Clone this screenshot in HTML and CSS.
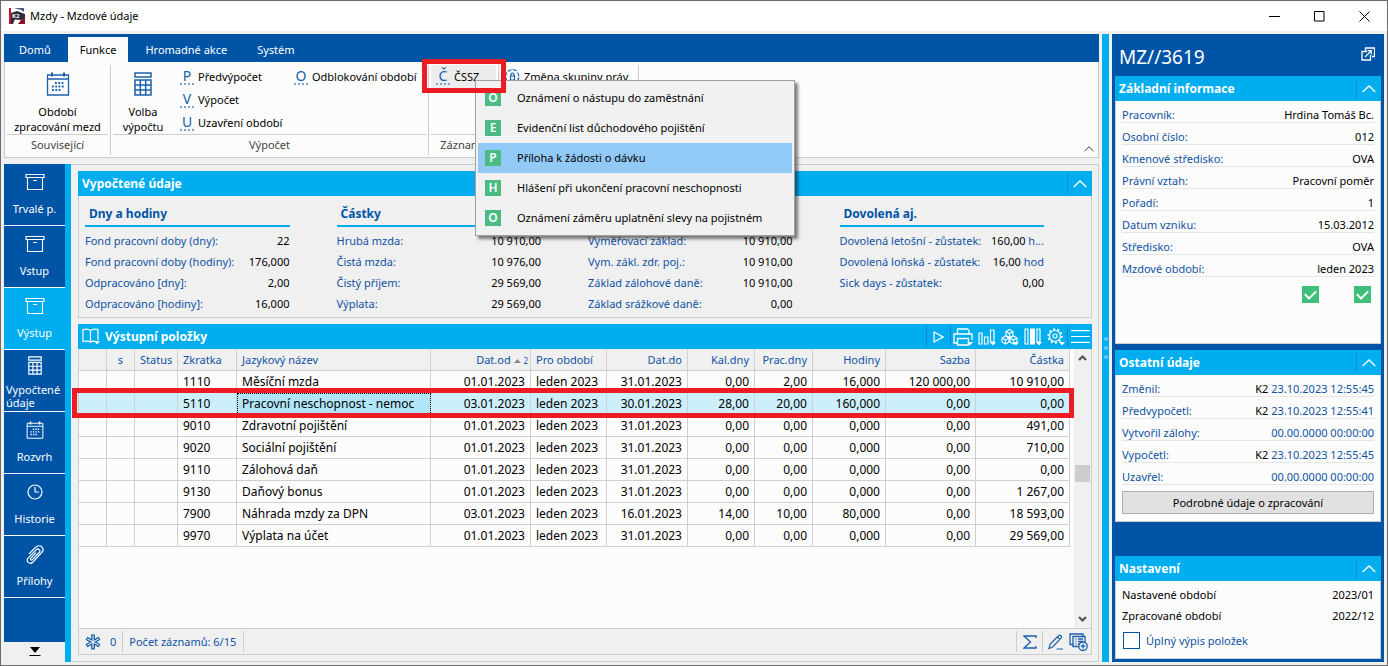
FILE: index.html
```html
<!DOCTYPE html>
<html lang="cs">
<head>
<meta charset="utf-8">
<title>Mzdy - Mzdové údaje</title>
<link rel="stylesheet" href="styles.css">
</head>
<body>
<svg class="defs" aria-hidden="true">
  <symbol id="i-box" viewBox="0 0 20 18"><path d="M1 1.500h18v3H1zM2.500 4.500h15v12h-15zM8 7.500h4" fill="none" stroke="currentColor" stroke-width="1.100"/></symbol>
  <symbol id="i-calc" viewBox="0 0 18 24"><path d="M1 1h16v4H1zM1 8h16v15H1zM1 13h16M1 18h16M6.300 8v15M11.700 8v15" fill="none" stroke="currentColor" stroke-width="1.500"/></symbol>
  <symbol id="i-cal" viewBox="0 0 24 24"><path d="M1.500 3h21v20h-21zM1.500 7h21" fill="none" stroke="currentColor" stroke-width="1.300"/><path d="M6 .500v4M18 .500v4" stroke="currentColor" stroke-width="2"/><path d="M9 11h10M6 14.500h13M6 18h9" stroke="currentColor" stroke-width="1.800" stroke-dasharray="1.800 1.500"/></symbol>
  <symbol id="i-up" viewBox="0 0 14 8"><path d="M.700 7L7 1l6.300 6" fill="none" stroke="currentColor" stroke-width="1.300"/></symbol>
</svg>
<div class="window">
  <header class="titlebar">
    <svg class="logo" viewBox="0 0 16 16"><path d="M0 0h16v16H0z" fill="#fff"/><path d="M0 0h2v16H0z" fill="#d3122a"/><path d="M2 5l6-2 8 3v5l-5 1-9-1z" fill="#2a2c3c"/><path d="M5 0h10v4l-3-2z" fill="#4a5a78"/><path d="M2 11h4l-2 5H2z" fill="#2a2c3c"/><path d="M9 16l3-4 4-3v7z" fill="#8d1226"/><text x="3" y="10" class="logo-text">K2</text></svg>
    <h1 class="window-title">Mzdy - Mzdové údaje</h1>
    <button class="win-btn" aria-label="Minimalizovat"><svg width="11" height="11" viewBox="0 0 11 11"><path d="M0 5.500h11" stroke="#000"/></svg></button>
    <button class="win-btn" aria-label="Maximalizovat"><svg width="11" height="11" viewBox="0 0 11 11"><path d="M.5.5h9.500v9.500H.5z" fill="none" stroke="#000"/></svg></button>
    <button class="win-btn" aria-label="Zavřít"><svg width="11" height="11" viewBox="0 0 11 11"><path d="M.5.5l10 10M10.500.5l-10 10" stroke="#000"/></svg></button>
  </header>

  <div class="frame">
    <div class="main">
      <nav class="tabs">
        <button class="tab">Domů</button>
        <button class="tab tab-active">Funkce</button>
        <button class="tab">Hromadné akce</button>
        <button class="tab">Systém</button>
      </nav>

      <section class="ribbon">
        <div class="group group-related">
          <div class="group-body">
            <button class="big-btn"><svg width="24" height="24"><use href="#i-cal"/></svg><span>Období<br>zpracování mezd</span></button>
          </div>
          <div class="group-label">Související</div>
        </div>
        <div class="group group-calc">
          <div class="group-body">
            <button class="big-btn"><svg width="18" height="24"><use href="#i-calc"/></svg><span>Volba<br>výpočtu</span></button>
            <div class="small-col small-col-wide">
              <button class="small-btn"><span class="letter">P</span>Předvýpočet</button>
              <button class="small-btn"><span class="letter">V</span>Výpočet</button>
              <button class="small-btn"><span class="letter">U</span>Uzavření období</button>
            </div>
            <div class="small-col">
              <button class="small-btn"><span class="letter">O</span>Odblokování období</button>
            </div>
          </div>
          <div class="group-label">Výpočet</div>
        </div>
        <div class="group group-records">
          <div class="group-body">
            <div class="dropdown">
              <button class="small-btn small-btn-open"><span class="letter">Č</span>ČSSZ</button>
              <ul class="menu">
                <li><button class="menu-item"><span class="badge">O</span>Oznámení o nástupu do zaměstnání</button></li>
                <li><button class="menu-item"><span class="badge">E</span>Evidenční list důchodového pojištění</button></li>
                <li><button class="menu-item menu-item-active"><span class="badge">P</span>Příloha k žádosti o dávku</button></li>
                <li><button class="menu-item"><span class="badge">H</span>Hlášení při ukončení pracovní neschopnosti</button></li>
                <li><button class="menu-item"><span class="badge">O</span>Oznámení záměru uplatnění slevy na pojistném</button></li>
              </ul>
              <span class="mark mark-button"></span>
            </div>
          </div>
          <div class="group-label">Záznamy</div>
        </div>
        <div class="group group-rights">
          <div class="group-body">
            <button class="small-btn"><svg width="15" height="15" viewBox="0 0 15 15" fill="none" stroke="#1b5fad" stroke-width="1.200"><path d="M3 2.500a6.500 6.500 0 0 1 9 0M12.500 3.500a6.500 6.500 0 0 1-1 9M2 3.500a6.500 6.500 0 0 0 0 8" stroke-dasharray="4 1"/><path d="M5.500 7h4v4h-4zM6 7V5.500a1.500 1.500 0 0 1 3 0V7"/></svg>Změna skupiny práv</button>
          </div>
          <div class="group-label">&nbsp;</div>
        </div>
        <button class="collapse-ribbon" aria-label="Sbalit pás karet"><svg width="10" height="6"><use href="#i-up"/></svg></button>
      </section>

      <div class="work">
        <nav class="side-nav">
          <button class="nav-item"><svg width="20" height="18"><use href="#i-box"/></svg><span>Trvalé p.</span></button>
          <button class="nav-item"><svg width="20" height="18"><use href="#i-box"/></svg><span>Vstup</span></button>
          <button class="nav-item nav-active"><svg width="20" height="18"><use href="#i-box"/></svg><span>Výstup</span></button>
          <button class="nav-item nav-two"><svg width="14" height="19"><use href="#i-calc"/></svg><span>Vypočtené údaje</span></button>
          <button class="nav-item"><svg width="18" height="18"><use href="#i-cal"/></svg><span>Rozvrh</span></button>
          <button class="nav-item"><svg width="18" height="18" viewBox="0 0 18 18" fill="none" stroke="#fff" stroke-width="1.200"><circle cx="9" cy="9" r="7"/><path d="M9 4v5h4"/></svg><span>Historie</span></button>
          <button class="nav-item"><svg width="18" height="20" viewBox="0 0 18 20" fill="none" stroke="#fff" stroke-width="1.200"><path d="M3 9l6.500-6.700c2-2 4.800-1.800 6.300-.3 1.600 1.600 1.400 4-.2 5.700L7 17c-1.500 1.500-3.500 1.600-4.800.4C.9 16 1.200 14 2.500 12.700l7.600-7.900c1-1 2.400-1 3.200-.2.800.8.700 2-.1 2.900L6.400 14.600c-.5.500-1.300.5-1.700.1-.5-.4-.4-1.100.1-1.600L10 7.700"/></svg><span>Přílohy</span></button>
          <button class="nav-more" aria-label="Další"><svg width="12" height="10" viewBox="0 0 12 10"><path d="M1 0h10L6 6z"/><path d="M.5 8.500h11" stroke="#000"/></svg></button>
        </nav>

        <div class="content">
          <section class="panel">
            <header class="panel-head">
              <h2>Vypočtené údaje</h2>
              <button class="head-btn" aria-label="Sbalit"><svg width="14" height="8"><use href="#i-up"/></svg></button>
            </header>
            <div class="summary">
              <div class="sum-col">
                <h3>Dny a hodiny</h3>
                <dl>
                  <div><dt>Fond pracovní doby (dny):</dt><dd>22</dd></div>
                  <div><dt>Fond pracovní doby (hodiny):</dt><dd>176,000</dd></div>
                  <div><dt>Odpracováno [dny]:</dt><dd>2,00</dd></div>
                  <div><dt>Odpracováno [hodiny]:</dt><dd>16,000</dd></div>
                </dl>
              </div>
              <div class="sum-col">
                <h3>Částky</h3>
                <dl>
                  <div><dt>Hrubá mzda:</dt><dd>10 910,00</dd></div>
                  <div><dt>Čistá mzda:</dt><dd>10 976,00</dd></div>
                  <div><dt>Čistý příjem:</dt><dd>29 569,00</dd></div>
                  <div><dt>Výplata:</dt><dd>29 569,00</dd></div>
                </dl>
              </div>
              <div class="sum-col">
                <div class="sum-rule"></div>
                <dl>
                  <div><dt>Vyměřovací základ:</dt><dd>10 910,00</dd></div>
                  <div><dt>Vym. zákl. zdr. poj.:</dt><dd>10 910,00</dd></div>
                  <div><dt>Základ zálohové daně:</dt><dd>10 910,00</dd></div>
                  <div><dt>Základ srážkové daně:</dt><dd>0,00</dd></div>
                </dl>
              </div>
              <div class="sum-col">
                <h3>Dovolená aj.</h3>
                <dl>
                  <div><dt>Dovolená letošní - zůstatek:</dt><dd>160,00 <span class="unit">h...</span></dd></div>
                  <div><dt>Dovolená loňská - zůstatek:</dt><dd>16,00 <span class="unit">hod</span></dd></div>
                  <div><dt>Sick days - zůstatek:</dt><dd>0,00</dd></div>
                </dl>
              </div>
            </div>
          </section>

          <section class="panel panel-items">
            <header class="panel-head">
              <svg class="book" width="18" height="17" viewBox="0 0 18 17" fill="none" stroke="#fff" stroke-width="1.200"><path d="M8.500 14V2.500C7 1 3 1 1 1.500V13.500c3-.5 6-.5 7.500.8 1.500-1.300 3-1.300 4.500-1M8.500 2.500C10 1 14 1 16 1.500V12"/><path d="M12 13h6l-3 3.500z" fill="#fff" stroke="none"/></svg>
              <h2>Výstupní položky</h2>
              <button class="head-btn head-play" aria-label="Spustit"><svg width="11" height="12" viewBox="0 0 11 12" fill="none" stroke="#fff" stroke-width="1.200"><path d="M1 1l9 5-9 5z"/></svg></button>
              <div class="tools">
                <button class="tool" aria-label="Tisk"><svg width="20" height="18" viewBox="0 0 20 18" fill="none" stroke="#fff" stroke-width="1.300"><path d="M4.500 6V1h10l1.500 1.500V6M4.500 15H1V6h18v6M4.500 10.500h11V17h-11z"/><path d="M14 14h6l-3 3.500z" fill="#fff" stroke="none"/></svg></button>
                <button class="tool" aria-label="Graf"><svg width="18" height="18" viewBox="0 0 18 18" fill="none" stroke="#fff" stroke-width="1.200"><path d="M1 5h3v11H1zM6.500 9h3.500v7H6.500zM12.500 2H16v12h-3.500z"/><path d="M12 14h6l-3 3.500z" fill="#fff" stroke="none"/></svg></button>
                <button class="tool" aria-label="Kostky"><svg width="18" height="18" viewBox="0 0 18 18" fill="none" stroke="#fff" stroke-width="1.100"><path d="M8.500 1.500l3.500 2v4l-3.500 2-3.500-2v-4zM5 3.500l3.500 2 3.500-2M8.500 5.500v4M4.500 8L8 10v4l-3.500 2L1 14v-4zM1 10l3.500 2L8 10M4.500 12v4M12.500 8l3.500 2v4l-3.500 2L9 14v-4zM9 10l3.500 2 3.500-2M12.500 12v4"/><path d="M12 14h6l-3 3.500z" fill="#fff" stroke="none"/></svg></button>
                <button class="tool" aria-label="Sloupce"><svg width="18" height="18" viewBox="0 0 18 18" fill="none" stroke="#fff" stroke-width="1.200"><path d="M1 1h3v15H1zM13 1h3v13h-3z"/><path d="M6 .500h5v16H6zM12 14h6l-3 3.500z" fill="#fff" stroke="none"/></svg></button>
                <button class="tool" aria-label="Nastavení"><svg width="18" height="18" viewBox="0 0 18 18" fill="none" stroke="#fff" stroke-width="1.200"><circle cx="8" cy="8" r="5.500"/><circle cx="8" cy="8" r="2"/><circle cx="8" cy="8" r="6.800" stroke-width="1.700" stroke-dasharray="2.100 2.172"/><path d="M12 14h6l-3 3.500z" fill="#fff" stroke="none"/></svg></button>
              </div>
              <button class="head-btn" aria-label="Nabídka"><svg width="19" height="13" viewBox="0 0 19 13" stroke="#fff" stroke-width="1.200"><path d="M0 .600h19M0 6.500h19M0 12.400h19"/></svg></button>
            </header>
            <div class="grid-area">
              <div class="grid-table">
                <table>
                  <colgroup><col class="w-28"><col class="w-28"><col class="w-43"><col class="w-59"><col><col class="w-100"><col class="w-76"><col class="w-81"><col class="w-67"><col class="w-58"><col class="w-73"><col class="w-90"><col class="w-94"></colgroup>
                  <thead><tr><th></th><th class="mid">s</th><th>Status</th><th>Zkratka</th><th>Jazykový název</th><th class="num sorted">Dat.od <svg width="7" height="4" viewBox="0 0 7 4"><path d="M0 4h7L3.500 0z" fill="#888"/></svg> <small>2</small></th><th>Pro období</th><th class="num">Dat.do</th><th class="num">Kal.dny</th><th class="num">Prac.dny</th><th class="num">Hodiny</th><th class="num">Sazba</th><th class="num">Částka</th></tr></thead>
                  <tbody>
                    <tr><td></td><td></td><td></td><td>1110</td><td>Měsíční mzda</td><td class="num">01.01.2023</td><td>leden 2023</td><td class="num">31.01.2023</td><td class="num">0,00</td><td class="num">2,00</td><td class="num">16,000</td><td class="num">120 000,00</td><td class="num">10 910,00</td></tr>
                    <tr class="selected"><td><span class="mark mark-row"></span></td><td></td><td></td><td>5110</td><td class="focus">Pracovní neschopnost - nemoc</td><td class="num">03.01.2023</td><td>leden 2023</td><td class="num">30.01.2023</td><td class="num">28,00</td><td class="num">20,00</td><td class="num">160,000</td><td class="num">0,00</td><td class="num">0,00</td></tr>
                    <tr><td></td><td></td><td></td><td>9010</td><td>Zdravotní pojištění</td><td class="num">01.01.2023</td><td>leden 2023</td><td class="num">31.01.2023</td><td class="num">0,00</td><td class="num">0,00</td><td class="num">0,000</td><td class="num">0,00</td><td class="num">491,00</td></tr>
                    <tr><td></td><td></td><td></td><td>9020</td><td>Sociální pojištění</td><td class="num">01.01.2023</td><td>leden 2023</td><td class="num">31.01.2023</td><td class="num">0,00</td><td class="num">0,00</td><td class="num">0,000</td><td class="num">0,00</td><td class="num">710,00</td></tr>
                    <tr><td></td><td></td><td></td><td>9110</td><td>Zálohová daň</td><td class="num">01.01.2023</td><td>leden 2023</td><td class="num">31.01.2023</td><td class="num">0,00</td><td class="num">0,00</td><td class="num">0,000</td><td class="num">0,00</td><td class="num">0,00</td></tr>
                    <tr><td></td><td></td><td></td><td>9130</td><td>Daňový bonus</td><td class="num">01.01.2023</td><td>leden 2023</td><td class="num">31.01.2023</td><td class="num">0,00</td><td class="num">0,00</td><td class="num">0,000</td><td class="num">0,00</td><td class="num">1 267,00</td></tr>
                    <tr><td></td><td></td><td></td><td>7900</td><td>Náhrada mzdy za DPN</td><td class="num">03.01.2023</td><td>leden 2023</td><td class="num">16.01.2023</td><td class="num">14,00</td><td class="num">10,00</td><td class="num">80,000</td><td class="num">0,00</td><td class="num">18 593,00</td></tr>
                    <tr><td></td><td></td><td></td><td>9970</td><td>Výplata na účet</td><td class="num">01.01.2023</td><td>leden 2023</td><td class="num">31.01.2023</td><td class="num">0,00</td><td class="num">0,00</td><td class="num">0,000</td><td class="num">0,00</td><td class="num">29 569,00</td></tr>
                  </tbody>
                </table>
              </div>
              <div class="scrollbar">
                <svg width="9" height="6" viewBox="0 0 9 6" fill="none" stroke="#505050" stroke-width="2"><path d="M1 5l3.500-3.500L8 5"/></svg>
                <div class="track"><span class="thumb"></span></div>
                <svg width="9" height="6" viewBox="0 0 9 6" fill="none" stroke="#505050" stroke-width="2"><path d="M1 1l3.500 3.500L8 1"/></svg>
              </div>
            </div>
            <footer class="status">
              <div class="status-cell status-star"><svg width="16" height="16" viewBox="0 0 16 16" fill="none" stroke="#0054a6"><path d="M8 .500v15M1.500 4.200l13 7.600M1.500 11.800l13-7.600" stroke-width="3.600"/><path d="M8 1.500v13M2.300 4.700l11.400 6.600M2.300 11.300l11.400-6.600" stroke="#f0f0f0" stroke-width="1.200"/></svg><span>0</span></div>
              <div class="status-cell status-count">Počet záznamů: 6/15</div>
              <button class="status-btn" aria-label="Součet"><svg width="14" height="14" viewBox="0 0 14 14" fill="none" stroke="#1b5fad" stroke-width="1.300"><path d="M13 3V1H1l6.500 6L1 13h12v-2"/></svg></button>
              <button class="status-btn" aria-label="Upravit"><svg width="16" height="16" viewBox="0 0 16 16" fill="none" stroke="#1b5fad" stroke-width="1.200"><path d="M1 14.500l1.200-4.500L10.800 1.500c1.200-1 3.500 1 2.400 2.400L4.700 13zM9.500 3l2.500 2.400M8.500 15H15"/></svg></button>
              <button class="status-add" aria-label="Přidat"><svg width="19" height="18" viewBox="0 0 19 18" fill="none" stroke="#1b5fad" stroke-width="1.300"><path d="M4 3.500h12v10H4zM4 11.500H1V1h13v2.500M6.500 6h1M9 6h5M6.500 8.500h1M9 8.500h5M6.500 11h1M9 11h2"/><circle cx="14" cy="13.200" r="4.200" fill="#f0f0f0"/><path d="M11.800 13.200h4.400M14 11v4.400"/></svg></button>
            </footer>
          </section>
        </div>
      </div>
    </div>

    <div class="splitter"><i></i><i></i><i></i></div>

    <aside class="info">
      <header class="info-title"><h2>MZ//3619</h2><button class="plain" aria-label="Otevřít v novém okně"><svg width="14" height="14" viewBox="0 0 14 14" fill="none" stroke="#fff" stroke-width="1.300"><path d="M4.500 4V1h9v8.500H11"/><path d="M6 4.500H1V13h8.500V8"/><path d="M4 10l6-6M6.500 3.700h3.800v3.800" stroke-width="1.200"/></svg></button></header>
      <section class="card card-grow">
        <header class="panel-head"><h2>Základní informace</h2><button class="head-btn" aria-label="Sbalit"><svg width="14" height="8"><use href="#i-up"/></svg></button></header>
        <dl class="facts">
          <div><dt>Pracovník:</dt><dd>Hrdina Tomáš Bc.</dd></div>
          <div><dt>Osobní číslo:</dt><dd>012</dd></div>
          <div><dt>Kmenové středisko:</dt><dd>OVA</dd></div>
          <div><dt>Právní vztah:</dt><dd>Pracovní poměr</dd></div>
          <div><dt>Pořadí:</dt><dd>1</dd></div>
          <div><dt>Datum vzniku:</dt><dd>15.03.2012</dd></div>
          <div><dt>Středisko:</dt><dd>OVA</dd></div>
          <div><dt>Mzdové období:</dt><dd>leden 2023</dd></div>
        </dl>
        <div class="checks">
          <input type="checkbox" class="green" checked aria-label="Předvypočteno">
          <input type="checkbox" class="green" checked aria-label="Vypočteno">
        </div>
      </section>
      <section class="card">
        <header class="panel-head"><h2>Ostatní údaje</h2><button class="head-btn" aria-label="Sbalit"><svg width="14" height="8"><use href="#i-up"/></svg></button></header>
        <dl class="facts">
          <div><dt>Změnil:</dt><dd>K2 <span class="unit">23.10.2023 12:55:45</span></dd></div>
          <div><dt>Předvypočetl:</dt><dd>K2 <span class="unit">23.10.2023 12:55:41</span></dd></div>
          <div><dt>Vytvořil zálohy:</dt><dd><span class="unit">00.00.0000 00:00:00</span></dd></div>
          <div><dt>Vypočetl:</dt><dd>K2 <span class="unit">23.10.2023 12:55:45</span></dd></div>
          <div><dt>Uzavřel:</dt><dd><span class="unit">00.00.0000 00:00:00</span></dd></div>
        </dl>
        <button class="detail-btn">Podrobné údaje o zpracování</button>
      </section>
      <section class="card card-settings">
        <header class="panel-head"><h2>Nastavení</h2><button class="head-btn" aria-label="Sbalit"><svg width="14" height="8"><use href="#i-up"/></svg></button></header>
        <dl class="settings">
          <div><dt>Nastavené období</dt><dd>2023/01</dd></div>
          <div><dt>Zpracované období</dt><dd>2022/12</dd></div>
        </dl>
        <label class="full-list"><input type="checkbox" class="box">Úplný výpis položek</label>
      </section>
    </aside>
  </div>
</div>
</body>
</html>
```
FILE: styles.css
```css
* { box-sizing: border-box; }
body, h1, h2, h3, dl, dd, ul { margin: 0; padding: 0; }
body { font: 11px/16px "Noto Sans", "Open Sans", sans-serif; color: #000; }
button { font: inherit; color: inherit; background: none; border: 0; padding: 0; margin: 0; }
svg { display: block; flex: none; }
ul { list-style: none; }
.defs { position: absolute; width: 0; height: 0; }

.window { min-height: 100vh; display: flex; flex-direction: column; background: #f0f0f0; border: 1px solid #6b6b6b; }
.titlebar { height: 30px; display: flex; align-items: center; background: #fff; padding-left: 8px; }
.logo { width: 16px; height: 16px; margin-right: 5px; }
.logo-text { font: bold 6px "Open Sans", sans-serif; fill: #fff; }
.window-title { flex: 1; font-size: 11px; font-weight: 400; }
.win-btn { width: 45px; height: 28px; display: grid; place-items: center; }

.frame { flex: 1; display: flex; padding: 3px; }
.main { flex: 1; min-width: 0; display: flex; flex-direction: column; }

.tabs { height: 28px; display: flex; align-items: flex-end; background: #0054a6; color: #fff; padding-left: 1px; }
.tab { height: 25px; padding: 0 15px; }
.tab-active { background: #fcfcfc; color: #000; padding: 0 12px; }
.tab:first-child { padding: 0 17px 0 14px; }
.tab:nth-child(3) { padding: 0 15px 0 17px; }

.ribbon { height: 96px; display: flex; position: relative; background: #fcfcfc; border: 1px solid #ccc; border-top: 0; padding: 3px 0 2px; }
.group { display: flex; flex-direction: column; border-right: 1px solid #ccc; padding: 0 2px; }
.group-body { flex: 1; display: flex; align-items: flex-start; }
.group-label { border-top: 1px solid #ccc; text-align: center; color: #444; height: 21px; line-height: 20px; overflow: hidden; }
.group-related { width: 106px; }
.group-calc { width: 318px; }
.group-records { width: 70px; }
.group-rights { width: 140px; }
.group-related .big-btn { width: 100%; }
.big-btn { width: 60px; padding-top: 7px; display: flex; flex-direction: column; align-items: center; gap: 8px; line-height: 15px; color: #000; white-space: nowrap; }
.big-btn svg { color: #1b5fad; }
.small-col { padding-left: 7px; }
.small-col-wide { width: 114px; }
.small-btn { display: flex; align-items: center; gap: 4px; height: 23px; white-space: nowrap; }
.small-btn-open { width: 65px; background: #ececec; padding-left: 5px; }
.letter { width: 14px; height: 17px; font-size: 14px; line-height: 15px; text-align: center; color: #1b5fad; border-bottom: 2px dotted #7ba3d2; }
.group-rights .small-btn { padding-left: 4px; }
.collapse-ribbon { position: absolute; right: 4px; bottom: 5px; color: #333; }

.dropdown { position: relative; }
.menu { position: absolute; z-index: 2; left: 44px; top: 15px; width: 320px; padding: 2px; background: #f1f1f1; border: 1px solid #a0a0a0; box-shadow: 3px 3px 3px rgba(0, 0, 0, .5); }
.menu-item { width: 100%; height: 30px; display: flex; align-items: center; gap: 16px; padding-left: 7px; text-align: left; white-space: nowrap; }
.menu-item-active { background: #91c9f7; }
.badge { width: 16px; height: 16px; background: #4bbb83; color: #fff; font-size: 12px; font-weight: 600; line-height: 16px; text-align: center; }
.mark { position: absolute; z-index: 3; border: 5px solid #ed1c24; pointer-events: none; }
.mark-button { left: -9px; top: -6px; width: 84px; height: 34px; }
.mark-row { left: -7px; right: -4px; top: -5px; bottom: -3px; }

.work { flex: 1; display: flex; margin-top: 6px; }
.side-nav { width: 67px; display: flex; flex-direction: column; border-right: 6px solid #00adef; background: #0054a6; color: #fff; }
.nav-item { height: 62px; display: flex; flex-direction: column; align-items: center; justify-content: space-between; padding: 9px 0 8px; border-bottom: 1px solid #fff; }
.nav-active { background: #00adef; }
.nav-two { padding: 6px 2px 2px; line-height: 13px; text-align: left; }
.nav-more { height: 20px; margin-top: auto; display: grid; place-items: center; background: #f0f0f0; }

.content { flex: 1; min-width: 0; display: flex; flex-direction: column; gap: 6px; padding: 6px 6px 6px 7px; border: 1px solid #ccc; border-left: 0; }
.panel { border: 1px solid #ccc; border-top: 0; display: flex; flex-direction: column; }
.panel-items { flex: 1; }
.panel-head { height: 25px; margin: 0 -1px; display: flex; align-items: center; background: #00adef; color: #fff; padding-left: 4px; }
.panel-head h2 { flex: 1; font-size: 12px; font-weight: 700; line-height: 25px; }
.head-btn { width: 25px; height: 21px; display: grid; place-items: center; border-left: 1px solid #0092d0; }
.head-play { width: 24px; }
.tools { height: 21px; display: flex; align-items: center; gap: 5px; padding: 0 2px; border-left: 1px solid #0092d0; }
.book { margin-right: 5px; }

.summary { display: grid; grid-template-columns: repeat(4, 1fr); padding: 7px 0 3px 6px; }
.sum-col { padding-right: 47px; }
.sum-col h3, .sum-rule { height: 24px; padding-left: 4px; font-size: 12px; line-height: 22px; color: #0054a6; border-bottom: 2px solid #00adef; }
.sum-col dl { padding-top: 3px; }
.sum-col dl div { display: flex; justify-content: space-between; height: 21px; line-height: 22px; white-space: nowrap; }
.unit, dt { color: #0f52a4; }

.grid-area { flex: 1; display: flex; background: #fcfcfc; }
.grid-table { flex: 1; padding-right: 4px; }
table { width: 100%; table-layout: fixed; border-collapse: separate; border-spacing: 0; }
th, td { height: 22px; padding: 0 5px; line-height: 20px; border: solid #d0d0d0; border-width: 0 1px 1px 0; text-align: left; white-space: nowrap; }
th { font-weight: 400; color: #0f52a4; background: #f0f0f0; }
td { font-size: 12px; }
.num { text-align: right; }
.mid { text-align: center; }
.sorted { padding-right: 2px; }
.sorted svg { display: inline-block; vertical-align: middle; }
.sorted small { font-size: 8px; line-height: 8px; }
.selected { position: relative; }
.selected td { background: #cceffb; }
.selected .focus { background: #b0e5fa; outline: 1px dotted #000; outline-offset: -1px; }
.w-28 { width: 28px; } .w-43 { width: 43px; } .w-59 { width: 59px; } .w-100 { width: 100px; }
.w-76 { width: 76px; } .w-81 { width: 81px; } .w-67 { width: 67px; } .w-58 { width: 58px; }
.w-73 { width: 73px; } .w-90 { width: 90px; } .w-94 { width: 94px; }
.scrollbar { width: 17px; display: flex; flex-direction: column; align-items: center; padding: 6px 1px; background: #f0f0f0; }
.track { flex: 1; display: flex; flex-direction: column; }
.track::before { content: ""; flex: 103; }
.track::after { content: ""; flex: 133; }
.thumb { width: 15px; height: 17px; background: #cdcdcd; }

.status { height: 26px; display: flex; align-items: center; border-top: 1px solid #ccc; color: #0f52a4; padding-right: 3px; }
.status-cell { height: 21px; display: flex; align-items: center; border-right: 1px solid #ccc; }
.status-star { gap: 9px; padding: 0 6px; }
.status-count { padding: 0 7px 0 6px; margin-right: auto; }
.status-btn { width: 26px; height: 21px; display: grid; place-items: center; border-left: 1px solid #ccc; }
.status-add { padding-left: 1px; }

.splitter { width: 7px; margin: 0 3px; display: flex; flex-direction: column; align-items: center; justify-content: center; gap: 5px; background: #00adef; }
.splitter i { width: 4px; height: 4px; border-radius: 50%; background: #5fcbf5; }

.info { width: 272px; display: flex; flex-direction: column; gap: 6px; background: #0054a6; padding: 0 3px 3px; }
.info-title { height: 42px; margin-bottom: -6px; display: flex; align-items: center; justify-content: space-between; padding: 3px 6px 0 4px; color: #fff; }
.info-title h2 { font-size: 19px; font-weight: 400; line-height: 26px; }
.info-title .plain { padding-bottom: 6px; }
.card { background: #fcfcfc; border: 1px solid #ccc; border-top: 0; padding-bottom: 7px; }
.card-grow { flex: 1; }
.facts, .settings { padding: 0 6px; }
.facts div { display: flex; justify-content: space-between; height: 22px; line-height: 27px; border-bottom: 1px solid #e6e6e6; }
.checks { display: flex; justify-content: flex-end; gap: 35px; padding: 9px 9px 0 0; }
.green, .box { appearance: none; width: 17px; height: 17px; margin: 0; }
.green { display: grid; place-items: center; background: #3fbf79; }
.green::after { content: ""; width: 9px; height: 5px; margin-bottom: 3px; border: solid #fff; border-width: 0 0 2px 2px; transform: rotate(-45deg); }
.detail-btn { display: block; width: calc(100% - 12px); height: 23px; margin: 6px 6px 0; background: #e1e1e1; border: 1px solid #adadad; }
.card-settings { margin-top: 28px; padding-bottom: 9px; }
.settings { padding-top: 3px; }
.settings div { display: flex; justify-content: space-between; height: 21px; line-height: 22px; }
.settings dt { color: #000; }
.full-list { display: flex; align-items: center; gap: 6px; padding: 6px 7px 0; color: #0f52a4; }
.box { border: 1px solid #0054a6; background: #fff; }
```
